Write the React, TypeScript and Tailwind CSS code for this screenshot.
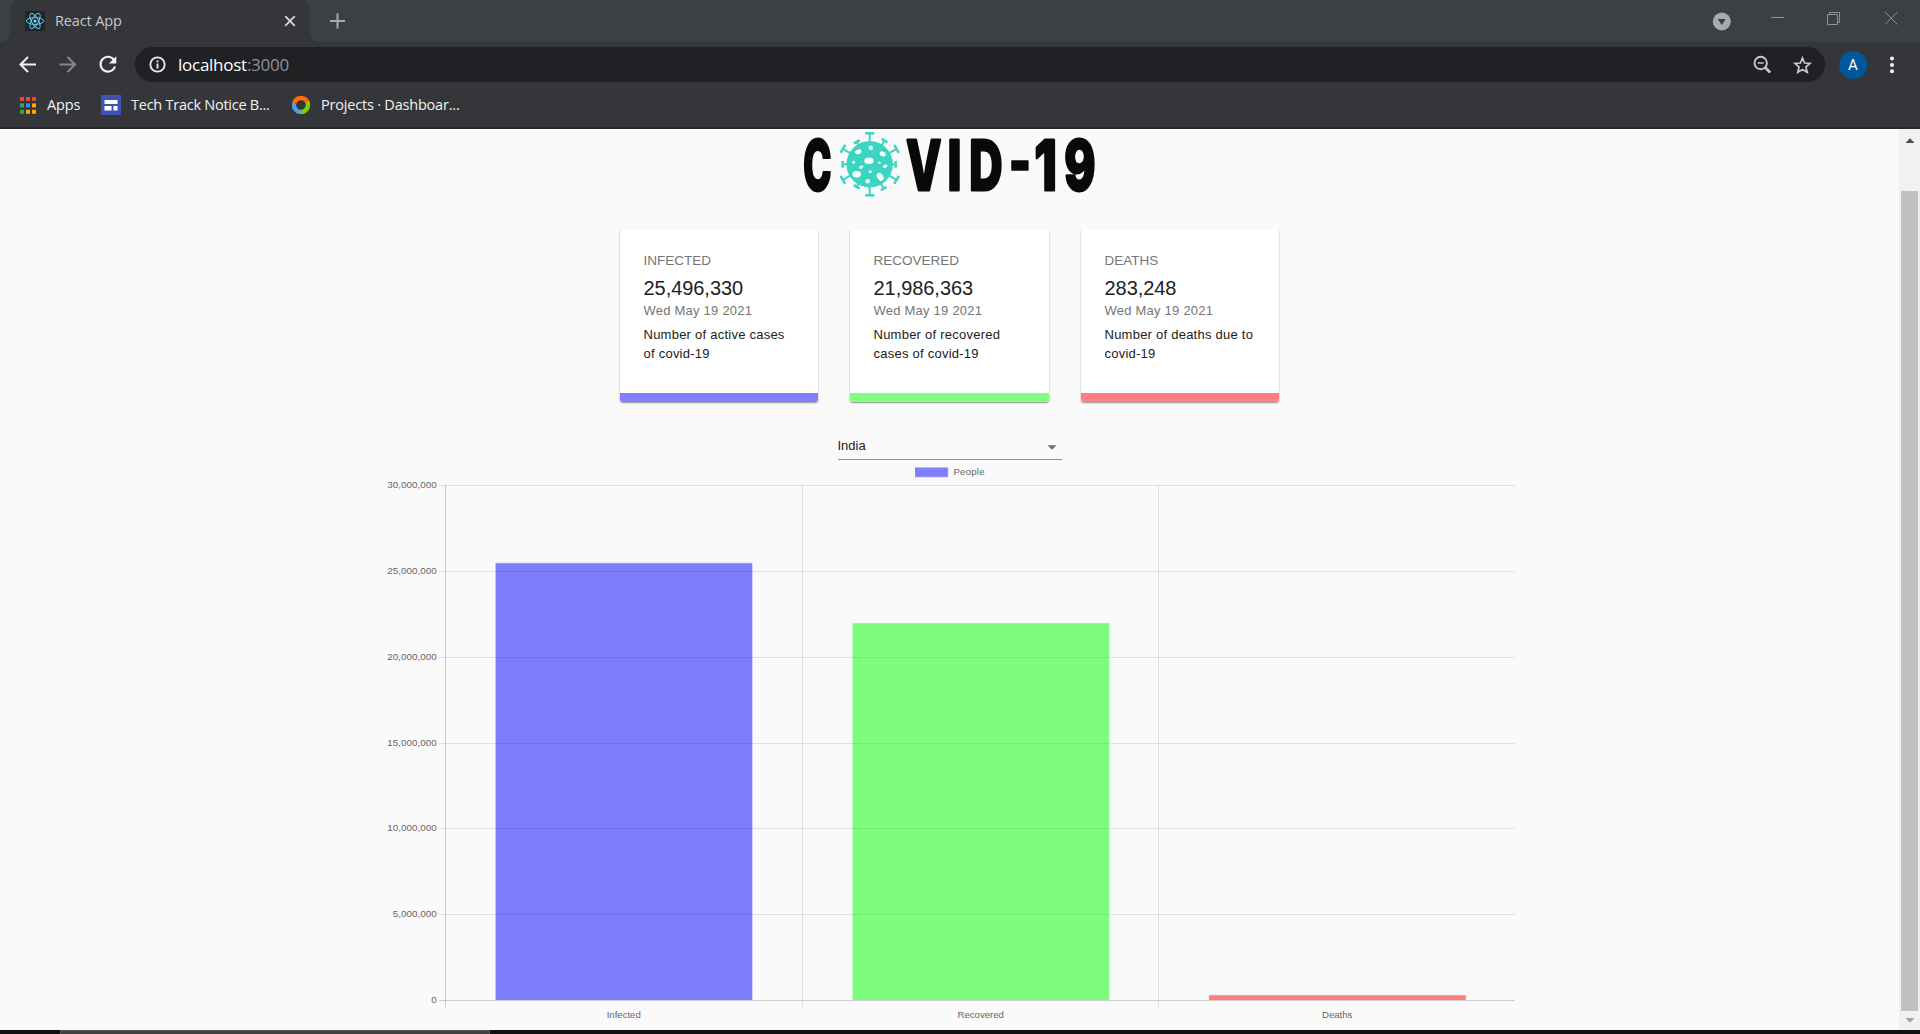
import React from "react";

const stats = [
  { label: "INFECTED", value: "25,496,330", lines: ["Number of active cases", "of covid-19"], bar: "bg-[#7f7fff]", width: "w-[198px]" },
  { label: "RECOVERED", value: "21,986,363", lines: ["Number of recovered", "cases of covid-19"], bar: "bg-[#7fff7f]", width: "w-[199px]" },
  { label: "DEATHS", value: "283,248", lines: ["Number of deaths due to", "covid-19"], bar: "bg-[#ff7f7f]", width: "w-[198px]" },
];

const appColors = ["#e8453c", "#e8453c", "#e8453c", "#34a853", "#2f8df5", "#f9ab00", "#34a853", "#f9ab00", "#f9ab00"];

function ReactMark() {
  return (
    <svg viewBox="0 0 20 20" className="h-5 w-5">
      <rect width="20" height="20" rx="1.5" fill="#20232a" />
      <g fill="none" stroke="#5fd0ec" strokeWidth="0.95">
        {[30, 90, 150].map((a) => (
          <ellipse key={a} cx="10" cy="10" rx="8.6" ry="3.4" transform={`rotate(${a - 30} 10 10)`} />
        ))}
      </g>
      <circle cx="10" cy="10" r="1.6" fill="#61dafb" />
    </svg>
  );
}

function TabStrip() {
  return (
    <div className="flex h-[42px] bg-[#3c4043]">
      <div className="w-[10px] bg-[#35363a]">
        <div className="h-[42px] w-[10px] rounded-br-[8px] bg-[#3c4043]" />
      </div>
      <div className="flex w-[300px] items-center rounded-t-[9px] bg-[#35363a] pl-[15px] pr-[13px]">
        <ReactMark />
        <span className="ml-[10px] text-[14.5px] tracking-[-0.12px] text-[#c5c8cc]">React App</span>
        <svg viewBox="0 0 14 14" className="ml-auto h-[14px] w-[14px]" stroke="#d3d5d8" strokeWidth="1.9">
          <path d="M2.2 2.2l9.6 9.6M11.8 2.2L2.2 11.8" />
        </svg>
      </div>
      <div className="w-[10px] bg-[#35363a]">
        <div className="h-[42px] w-[10px] rounded-bl-[8px] bg-[#3c4043]" />
      </div>
      <svg viewBox="0 0 16 16" className="ml-[9px] mt-[13px] h-4 w-4" stroke="#a8abae" strokeWidth="2">
        <path d="M8.500 .5v15M1 8h15" />
      </svg>
      <svg viewBox="0 0 208 42" className="ml-auto h-[42px] w-[208px]" fill="none" stroke="#909395" strokeWidth="1">
        <circle cx="9.8" cy="21.5" r="9" fill="#a8abae" stroke="none" />
        <path d="M5.8 19h8l-4 6z" fill="#3c4043" stroke="none" />
        <path d="M59 17.5h13" />
        <path d="M115.500 14.500h10v10h-10zM117.500 14.500v-2h10v10h-2" />
        <path d="M173 12l12.500 12.500M185.500 12l-12.500 12.500" />
      </svg>
    </div>
  );
}

function AddressBar() {
  return (
    <div className="flex h-[44px] items-center">
      <svg viewBox="0 0 135 44" className="h-[44px] w-[135px]" fill="none" strokeWidth="2">
        <path d="M36 22.500H20.500M28 15l-7.500 7.500L28 30" stroke="#f1f3f4" />
        <path d="M59.500 22.500H75M67.500 15l7.500 7.500-7.500 7.500" stroke="#84868a" />
        <path d="M114.200 18.200A7.400 7.400 0 1 0 115 24.500" stroke="#f1f3f4" strokeWidth="2.100" />
        <path d="M116.300 14.300v7.200h-7.400z" fill="#f1f3f4" />
      </svg>
      <div className="mt-[1px] flex h-[35px] w-[1690px] items-center rounded-full bg-[#202124] pl-[14px]">
        <svg viewBox="0 0 18 18" className="h-[17px] w-[17px]" fill="none" stroke="#e8eaed" strokeWidth="2">
          <circle cx="9" cy="9" r="7.600" />
          <path d="M9 8v5.200M9 4.700v2" />
        </svg>
        <span className="ml-[12px] text-[17px] tracking-[-0.26px] text-white">
          localhost<span className="text-[#8e9195]">:3000</span>
        </span>
        <svg viewBox="0 0 60 20" className="ml-auto mr-[12px] h-5 w-[60px]" fill="none" stroke="#c6c8ca" strokeWidth="1.900">
          <circle cx="7.700" cy="8" r="6.200" />
          <path d="M12.200 12.500l5 5" strokeWidth="2.600" />
          <path d="M4.700 8h6" strokeWidth="1.500" />
          <path d="M49.500 3l2.100 5 5.400.5-4.100 3.500 1.300 5.200-4.700-2.800-4.700 2.800 1.300-5.200L42 8.500l5.400-.5z" strokeWidth="1.700" />
        </svg>
      </div>
      <div className="ml-[14px] mt-[2px] flex h-7 w-7 items-center justify-center rounded-full bg-[#01579b] font-[Roboto] text-[15px] text-white">A</div>
      <svg viewBox="0 0 6 18" className="ml-[22px] mt-[2px] h-[18px] w-[6px]" fill="#f1f3f4">
        <circle cx="3" cy="2.600" r="2" />
        <circle cx="3" cy="9" r="2" />
        <circle cx="3" cy="15.300" r="2" />
      </svg>
    </div>
  );
}

function Bookmarks() {
  return (
    <div className="flex h-[38px] items-center pl-[20px] text-[14.5px] text-[#f1f3f4]">
      <svg viewBox="0 0 16 17" className="h-[17px] w-4">
        {appColors.map((c, i) => (
          <rect key={i} x={(i % 3) * 6} y={Math.floor(i / 3) * 6.4} width="4" height="4" fill={c} />
        ))}
      </svg>
      <span className="ml-[11px] w-[42px] tracking-[-0.15px]">Apps</span>
      <svg viewBox="0 0 20 20" className="ml-[12px] h-5 w-5">
        <rect width="20" height="20" fill="#3f51b5" />
        <path d="M3.500 5h13v4h-13zM3.500 11h7v4.500h-7zM12.500 11h4v4.500h-4z" fill="#fff" />
      </svg>
      <span className="ml-[10px] w-[149px] whitespace-nowrap tracking-[-0.25px]">Tech Track Notice B...</span>
      <svg viewBox="0 0 18 18" className="ml-[12px] h-[18px] w-[18px]" fill="none" strokeWidth="4.4">
        <path d="M2.300 7A7 7 0 0 1 15.500 6.500" stroke="#ff6d00" />
        <path d="M15.300 6A7 7 0 0 1 8 15.900" stroke="#7bd000" />
        <path d="M9 16A7 7 0 0 1 2.200 7" stroke="#4aa3e8" />
      </svg>
      <span className="ml-[11px] whitespace-nowrap tracking-[-0.2px]">Projects · Dashboar...</span>
    </div>
  );
}

const spikes = [
  [0, 32], [32, 29], [60, 32], [90, 27], [120, 32], [150, 29], [180, 32], [210, 27], [240, 32], [270, 28], [300, 32], [330, 27],
];

const letters = [
  { ch: "C", x: 803.3, y: 190.2, sx: 0.552, stroke: 3 },
  { ch: "V", x: 906.3, y: 190.2, sx: 0.665, stroke: 3 },
  { ch: "I", x: 947.6, y: 190.2, sx: 0.714, stroke: 3 },
  { ch: "D", x: 969.2, y: 190.2, sx: 0.672, stroke: 3 },
  { ch: "-", x: 1008.6, y: 185.8, sx: 0.709, stroke: 1.4 },
  { ch: "1", x: 1034.6, y: 190.2, sx: 0.741, stroke: 3 },
  { ch: "9", x: 1064.2, y: 190.2, sx: 0.69, stroke: 3 },
];

function Logo() {
  return (
    <svg viewBox="800 129 300 74" className="h-[74px] w-[300px] overflow-visible">
      <g fill="#070a09" stroke="#070a09" strokeLinejoin="round" fontFamily="Inter, sans-serif" fontWeight="800" fontSize="68.5">
        {letters.map((l) => (
          <text key={l.ch} strokeWidth={l.stroke} transform={`translate(${l.x} ${l.y}) scale(${l.sx} 1)`}>{l.ch}</text>
        ))}
      </g>
      <g transform="translate(869.700 164.300)">
        <g stroke="#3bd5c4" strokeWidth="2">
          {spikes.map(([a, r]) => (
            <g key={a} transform={`rotate(${a})`}>
              <path d={`M0 -20V${-r + 1}`} />
              <path d={`M${r > 30 ? -4.6 : -3.4} ${-r + 1}H${r > 30 ? 4.6 : 3.4}`} strokeWidth="2.500" />
            </g>
          ))}
        </g>
        <circle r="23.200" fill="#3bd5c4" />
        <g fill="#f7fcfb">
          <ellipse cx="-.7" cy="-3.500" rx="4.700" ry="3.300" />
          <ellipse cx="-11.500" cy="-12.500" rx="3.300" ry="2.300" transform="rotate(-20 -11.500 -12.500)" />
          <circle cx="1" cy="-16.500" r="2.200" />
          <ellipse cx="13" cy="-10.500" rx="3.200" ry="2.300" transform="rotate(25 13 -10.500)" />
          <ellipse cx="-13" cy="10" rx="4.300" ry="3.200" />
          <ellipse cx="10.500" cy="12.500" rx="3" ry="4.300" transform="rotate(-35 10.500 12.500)" />
          <ellipse cx="-8.500" cy="2.700" rx="2.300" ry="1.500" transform="rotate(-30 -8.500 2.700)" />
          <ellipse cx="15.500" cy="2" rx="2.400" ry="1.600" transform="rotate(-25 15.500 2)" />
          <circle cx="-16" cy="-2" r="1.400" />
          <circle cx="9.700" cy="-1.500" r="1.300" />
          <circle cx=".5" cy="7.500" r="1.500" />
          <circle cx="-2" cy="17" r="2.200" />
        </g>
      </g>
    </svg>
  );
}

function StatCards() {
  return (
    <div className="mt-[26px] flex gap-8 pr-[1px]">
      {stats.map((s) => (
        <div
          key={s.label}
          className={`flex h-[173px] flex-col overflow-hidden rounded-[3px] bg-white shadow-[0_1px_1px_rgba(0,0,0,0.16),0_1px_2px_rgba(0,0,0,0.3)] ${s.width}`}
        >
          <div className="grow whitespace-nowrap pl-[24px] pt-[22px]">
            <div className="h-[24px] text-[13.5px] leading-[20px] text-[#757575]">{s.label}</div>
            <div className="h-[26px] text-[20px] leading-[26px] tracking-[-0.05px] text-[#212121]">{s.value}</div>
            <div className="h-[24px] text-[13px] leading-[20px] tracking-[0.23px] text-[#757575]">Wed May 19 2021</div>
            {s.lines.map((l) => (
              <div key={l} className="text-[13px] leading-[19px] tracking-[0.24px] text-[#212121]">{l}</div>
            ))}
          </div>
          <div className={`h-[9px] ${s.bar}`} />
        </div>
      ))}
    </div>
  );
}

const ticks = ["30,000,000", "25,000,000", "20,000,000", "15,000,000", "10,000,000", "5,000,000", "0"];
const tickYs = [486.5, 572.5, 658.5, 744.5, 829.5, 915.5, 1001.5];
const bars = [
  { name: "Infected", x: 495, top: 564, color: "#0000ff" },
  { name: "Recovered", x: 852, top: 624, color: "#00ff00" },
  { name: "Deaths", x: 1208.5, top: 996, color: "#ff0000" },
];

function Chart() {
  return (
    <svg viewBox="380 461 1140 569" className="h-[569px] w-[1140px]" fontFamily="Liberation Sans, Arial, sans-serif" fontSize="9.600" fill="#666">
      <rect x="915" y="468" width="33.500" height="10.500" fill="#0000ff" fillOpacity="0.2" />
      <rect x="915" y="468.800" width="32.700" height="9" fill="#7f7fff" />
      <text x="953.500" y="476.300" textLength="31">People</text>
      {ticks.map((t, i) => (
        <g key={t}>
          <path d={`M439 ${tickYs[i]}H1515`} stroke="#000" strokeOpacity={i === 6 ? 0.18 : 0.1} />
          <text x="436.800" y={tickYs[i] + 2.5} textAnchor="end" fontSize="9.900">{t}</text>
        </g>
      ))}
      <path d="M445.500 486V1008" stroke="#000" strokeOpacity="0.18" />
      <path d="M802.500 486V1008M1158.500 486V1008" stroke="#000" strokeOpacity="0.1" />
      {bars.map((b) => (
        <g key={b.name}>
          <rect x={b.x} y={b.top - 0.5} width="257.700" height={1001.5 - b.top} fill={b.color} fillOpacity="0.1" />
          <rect x={b.x + 0.7} y={b.top + 0.3} width="256.500" height={1000.7 - b.top} fill={b.color} fillOpacity="0.440" />
          <text x={b.x + 128.7} y="1018.500" textAnchor="middle">{b.name}</text>
        </g>
      ))}
    </svg>
  );
}

export default function App() {
  return (
    <div className="flex h-[1034px] w-[1920px] flex-col overflow-hidden bg-[#fafafa]">
      <header className="h-[129px] border-b-2 border-[#27282b] bg-[#35363a] font-['Open_Sans',sans-serif]">
        <TabStrip />
        <AddressBar />
        <Bookmarks />
      </header>
      <div className="flex h-[901px]">
        <main className="flex w-[1899px] flex-col items-center font-['Liberation_Sans',Arial,sans-serif]">
          <Logo />
          <StatCards />
          <div className="mt-[32px] flex h-[26px] w-[224px] items-center justify-between border-b border-[#8c8c8c] pr-[5px] text-[13px] text-[#212121]">
            <span className="-mt-[2px]">India</span>
            <svg viewBox="0 0 10 5" className="mt-[1px] h-[5px] w-[10px]" fill="#6e6e6e">
              <path d="M.5 .3h9L5 4.800z" />
            </svg>
          </div>
          <Chart />
        </main>
        <aside className="flex w-[21px] flex-col items-center bg-[#f1f1f1]">
          <svg viewBox="0 0 10 5" className="mt-[9px] h-[5px] w-[10px]" fill="#505050">
            <path d="M.5 5h9L5 .3z" />
          </svg>
          <div className="mt-[48px] h-[820px] w-[17px] bg-[#c1c1c1]" />
          <svg viewBox="0 0 10 5" className="mt-[7px] h-[5px] w-[10px]" fill="#a3a3a3">
            <path d="M.5 0h9L5 4.700z" />
          </svg>
        </aside>
      </div>
      <footer className="flex h-1 bg-[#101010] pl-[60px]">
        <div className="h-1 w-[430px] border-x border-t border-[#5a5a5a] bg-[#3f3f3f]" />
      </footer>
    </div>
  );
}
